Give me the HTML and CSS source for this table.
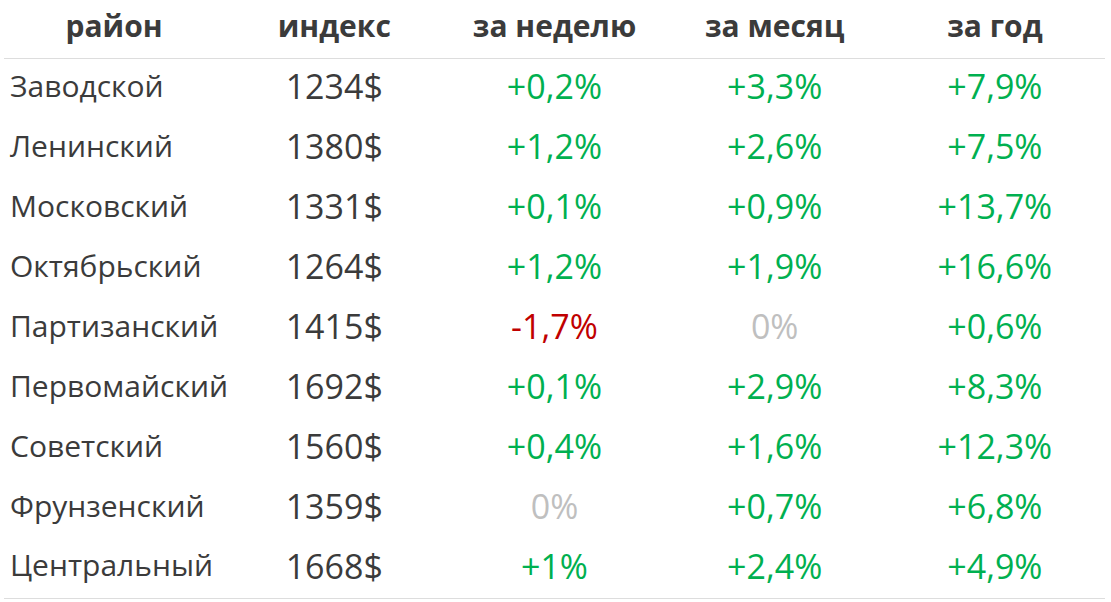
FILE: index.html
```html
<!DOCTYPE html>
<html lang="ru">
<head>
<meta charset="utf-8">
<link rel="stylesheet" href="styles.css">
</head>
<body>
<table class="tbl">
  <thead>
    <tr class="head-row"><th>район</th><th>индекс</th><th>за неделю</th><th>за месяц</th><th>за год</th></tr>
  </thead>
  <tbody>
    <tr><td class="name">Заводской</td><td class="idx">1234$</td><td class="up">+0,2%</td><td class="up">+3,3%</td><td class="up">+7,9%</td></tr>
    <tr><td class="name">Ленинский</td><td class="idx">1380$</td><td class="up">+1,2%</td><td class="up">+2,6%</td><td class="up">+7,5%</td></tr>
    <tr><td class="name">Московский</td><td class="idx">1331$</td><td class="up">+0,1%</td><td class="up">+0,9%</td><td class="up">+13,7%</td></tr>
    <tr><td class="name">Октябрьский</td><td class="idx">1264$</td><td class="up">+1,2%</td><td class="up">+1,9%</td><td class="up">+16,6%</td></tr>
    <tr><td class="name">Партизанский</td><td class="idx">1415$</td><td class="down">-1,7%</td><td class="zero">0%</td><td class="up">+0,6%</td></tr>
    <tr><td class="name">Первомайский</td><td class="idx">1692$</td><td class="up">+0,1%</td><td class="up">+2,9%</td><td class="up">+8,3%</td></tr>
    <tr><td class="name">Советский</td><td class="idx">1560$</td><td class="up">+0,4%</td><td class="up">+1,6%</td><td class="up">+12,3%</td></tr>
    <tr><td class="name">Фрунзенский</td><td class="idx">1359$</td><td class="zero">0%</td><td class="up">+0,7%</td><td class="up">+6,8%</td></tr>
    <tr><td class="name">Центральный</td><td class="idx">1668$</td><td class="up">+1%</td><td class="up">+2,4%</td><td class="up">+4,9%</td></tr>
  </tbody>
</table>
</body>
</html>
```
FILE: styles.css
```css
html, body {
  margin: 0;
  padding: 0;
  background: #ffffff;
}
body {
  padding: 0 6px 0 4px;
  font-family: "Open Sans", sans-serif;
  color: #3b3b3b;
}
.tbl {
  width: 1101px;
  border-collapse: collapse;
  table-layout: fixed;
  border-bottom: 1px solid #dddddd;
}
.tbl tr {
  height: 60px;
}
.tbl .head-row {
  height: 58px;
}
.tbl th {
  padding: 0 0 5px 0;
  font-size: 30px;
  font-weight: 700;
  text-align: center;
  vertical-align: middle;
  border-bottom: 1px solid #dddddd;
  color: #3b3b3b;
  line-height: 1;
}
.tbl td {
  padding: 0 0 4px 0;
  text-align: center;
  vertical-align: middle;
  font-size: 34px;
  line-height: 1;
}
.tbl td.name {
  text-align: left;
  padding: 0 0 5px 6px;
  font-size: 30px;
}
.tbl td.idx { color: #3b3b3b; }
.up { color: #00b050; }
.down { color: #c00000; }
.zero { color: #bfbfbf; }
```
